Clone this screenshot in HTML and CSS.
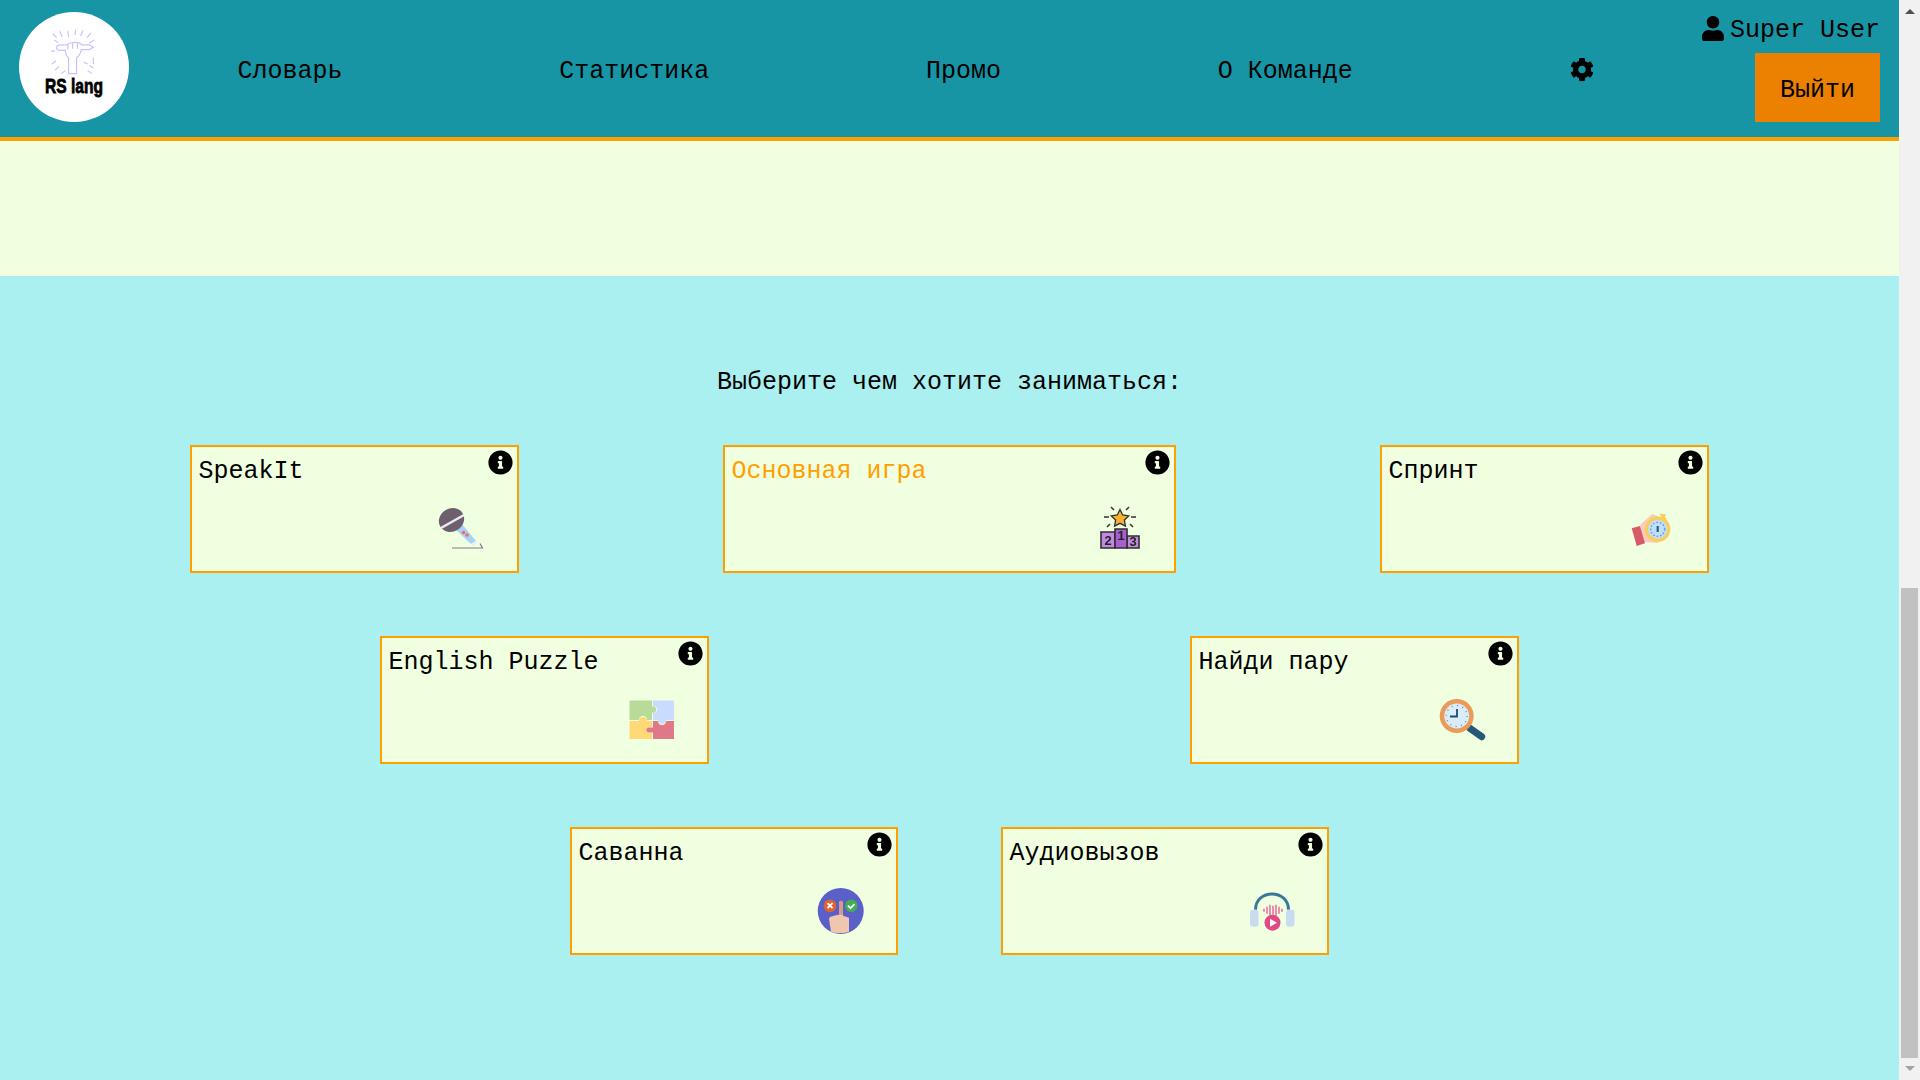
FILE: index.html
```html
<!DOCTYPE html>
<html lang="ru">
<head>
<meta charset="utf-8">
<title>RS lang</title>
<link rel="stylesheet" href="styles.css">
</head>
<body>
<div class="page">
  <header class="header">
    <div class="logo">
      <svg class="logo-art" viewBox="0 0 110 110">
        <g class="logo-lines" transform="translate(16 4) scale(.8)">
          <path d="M22 22l5 5M31 19l3 7M41 19l1 7M51 17l-1 7M60 18l-3 7M70 21l-5 6M74 30l-6 4M73 52v8M68 62l5 3M24 30l5 3M20 44h5M26 56l-5 4M30 63l-5 5M38 68l-5 4M66 68l5 4M61 58l5 2"/>
          <path d="M27 40c0-3 2-4 5-4h8c3-3 8-3 11-3 3 0 6 1 7 3h10l5 3-5 3H58c-1 4-2 8-6 10v20H42V52c-3-2-4-6-4-9h-6c-3 0-5-1-5-3z"/>
          <path d="M41 36v6M47 34v7M53 34v7"/>
        </g>
        <text class="logo-text" x="26" y="81" textLength="58" lengthAdjust="spacingAndGlyphs">RS lang</text>
      </svg>
    </div>
    <nav class="nav">
      <a class="nav-link">Словарь</a>
      <a class="nav-link">Статистика</a>
      <a class="nav-link">Промо</a>
      <a class="nav-link">О Команде</a>
      <svg class="cog" viewBox="0 0 512 512"><path d="M487.4 315.7l-42.6-24.6c4.3-23.2 4.3-47 0-70.2l42.6-24.6c4.9-2.8 7.1-8.6 5.5-14-11.1-35.6-30-67.8-54.7-94.6-3.8-4.1-10-5.1-14.8-2.3L380.8 110c-17.9-15.4-38.5-27.3-60.8-35.1V25.8c0-5.6-3.9-10.5-9.4-11.7-36.7-8.2-74.3-7.8-109.2 0-5.5 1.2-9.4 6.1-9.4 11.7V75c-22.2 7.9-42.8 19.8-60.8 35.1L88.7 85.5c-4.9-2.8-11-1.9-14.8 2.3-24.7 26.7-43.6 58.9-54.7 94.6-1.7 5.4.6 11.2 5.5 14L67.3 221c-4.3 23.2-4.3 47 0 70.2l-42.6 24.6c-4.9 2.8-7.1 8.6-5.5 14 11.1 35.6 30 67.8 54.7 94.6 3.8 4.1 10 5.1 14.8 2.3l42.6-24.6c17.9 15.4 38.5 27.3 60.8 35.1v49.2c0 5.6 3.9 10.5 9.4 11.7 36.7 8.2 74.3 7.8 109.2 0 5.5-1.2 9.4-6.1 9.4-11.7v-49.2c22.2-7.9 42.8-19.8 60.8-35.1l42.6 24.6c4.9 2.8 11 1.9 14.8-2.3 24.7-26.7 43.6-58.9 54.7-94.6 1.5-5.5-.7-11.3-5.6-14.1zM256 336c-44.1 0-80-35.9-80-80s35.9-80 80-80 80 35.9 80 80-35.9 80-80 80z"/></svg>
    </nav>
    <div class="account">
      <div class="user">
        <svg class="user-icon" viewBox="0 0 448 512"><path d="M224 256c70.7 0 128-57.3 128-128S294.7 0 224 0 96 57.3 96 128s57.3 128 128 128zm89.6 32h-16.7c-22.2 10.2-46.9 16-72.9 16s-50.6-5.8-72.9-16h-16.7C60.2 288 0 348.2 0 422.4V464c0 26.5 21.5 48 48 48h352c26.5 0 48-21.5 48-48v-41.6c0-74.2-60.2-134.4-134.4-134.4z"/></svg>
        <span class="user-name">Super User</span>
      </div>
      <button class="logout">Выйти</button>
    </div>
  </header>
  <div class="band"></div>
  <main class="content">
    <h1 class="prompt">Выберите чем хотите заниматься:</h1>
    <div class="rows">
      <div class="row row-a">
        <div class="card">
          <span class="card-title">SpeakIt</span>
          <svg class="info" viewBox="0 0 512 512"><path d="M256 8C119.043 8 8 119.083 8 256c0 136.997 111.043 248 248 248s248-111.003 248-248C504 119.083 392.957 8 256 8zm0 110c23.196 0 42 18.804 42 42s-18.804 42-42 42-42-18.804-42-42 18.804-42 42-42zm56 254c0 6.627-5.373 12-12 12h-88c-6.627 0-12-5.373-12-12v-24c0-6.627 5.373-12 12-12h12v-64h-12c-6.627 0-12-5.373-12-12v-24c0-6.627 5.373-12 12-12h64c6.627 0 12 5.373 12 12v100h12c6.627 0 12 5.373 12 12v24z"/></svg>
          <svg class="game-icon" viewBox="0 0 48 48">
            <path d="M17 24L24 19L38 36L33 39Z" fill="#a8d4f4"/>
            <path d="M33 39l5-3 1.500 2-4 3z" fill="#e8eef4"/>
            <circle cx="25.500" cy="27.500" r="1.800" fill="#f06a6a"/>
            <circle cx="29" cy="30" r="1.800" fill="#f06a6a"/>
            <ellipse cx="13.500" cy="15" rx="13" ry="11.500" transform="rotate(-30 13.500 15)" fill="#6e5f6e"/>
            <path d="M3 23L26 10" stroke="#e9eef0" stroke-width="2.500"/>
            <path d="M14 43H44.500L42 38.500" fill="none" stroke="#84788a" stroke-width="1.200"/>
          </svg>
        </div>
        <div class="card card-wide">
          <span class="card-title card-title-active">Основная игра</span>
          <svg class="info" viewBox="0 0 512 512"><path d="M256 8C119.043 8 8 119.083 8 256c0 136.997 111.043 248 248 248s248-111.003 248-248C504 119.083 392.957 8 256 8zm0 110c23.196 0 42 18.804 42 42s-18.804 42-42 42-42-18.804-42-42 18.804-42 42-42zm56 254c0 6.627-5.373 12-12 12h-88c-6.627 0-12-5.373-12-12v-24c0-6.627 5.373-12 12-12h12v-64h-12c-6.627 0-12-5.373-12-12v-24c0-6.627 5.373-12 12-12h64c6.627 0 12 5.373 12 12v100h12c6.627 0 12 5.373 12 12v24z"/></svg>
          <svg class="game-icon game-icon-sharp" viewBox="0 0 48 48">
            <path d="M25 4.500l2.700 5.500 6 .9-4.300 4.200 1 6-5.400-2.800-5.400 2.800 1-6-4.300-4.200 6-.9z" fill="#f8b030" stroke="#2f2f2f" stroke-width="1.300"/>
            <path d="M16 2l3 3M34 2l-3 3M9 12h5M36 12h5M12 22l3-3M38 22l-3-3" stroke="#333" stroke-width="1.500"/>
            <path d="M6 27H20V43H6zM32 31H44V43H32z" fill="#c08ae0" stroke="#2f2f2f" stroke-width="1.600"/>
            <path d="M20 24H32V43H20z" fill="#a860d0" stroke="#2f2f2f" stroke-width="1.600"/>
            <text class="podium-num" x="13" y="40">2</text>
            <text class="podium-num" x="26" y="35">1</text>
            <text class="podium-num" x="38" y="41">3</text>
          </svg>
        </div>
        <div class="card">
          <span class="card-title">Спринт</span>
          <svg class="info" viewBox="0 0 512 512"><path d="M256 8C119.043 8 8 119.083 8 256c0 136.997 111.043 248 248 248s248-111.003 248-248C504 119.083 392.957 8 256 8zm0 110c23.196 0 42 18.804 42 42s-18.804 42-42 42-42-18.804-42-42 18.804-42 42-42zm56 254c0 6.627-5.373 12-12 12h-88c-6.627 0-12-5.373-12-12v-24c0-6.627 5.373-12 12-12h12v-64h-12c-6.627 0-12-5.373-12-12v-24c0-6.627 5.373-12 12-12h64c6.627 0 12 5.373 12 12v100h12c6.627 0 12 5.373 12 12v24z"/></svg>
          <svg class="game-icon" viewBox="0 0 48 48">
            <path d="M12 20L24 9L30 11L36 20L30 38L16 37Z" fill="#f9cdbb"/>
            <path d="M3.700 23.300L12 21L17 38.300L8.700 41Z" fill="#d85a68"/>
            <path d="M31 8.500l7 1-1 3 2 1.500-2 2-5-3 1-2z" fill="#f8cf5a"/>
            <circle cx="29.700" cy="24.300" r="12.700" fill="#f8cf5a"/>
            <circle cx="29.700" cy="24.300" r="9.500" fill="#bfe0fa"/>
            <circle cx="29.700" cy="24.300" r="7" fill="none" stroke="#6f96c8" stroke-width="1.500" stroke-dasharray="1.500 2"/>
            <path d="M29.700 21v6" stroke="#2c5a86" stroke-width="2.200"/>
          </svg>
        </div>
      </div>
      <div class="row row-b">
        <div class="card">
          <span class="card-title">English Puzzle</span>
          <svg class="info" viewBox="0 0 512 512"><path d="M256 8C119.043 8 8 119.083 8 256c0 136.997 111.043 248 248 248s248-111.003 248-248C504 119.083 392.957 8 256 8zm0 110c23.196 0 42 18.804 42 42s-18.804 42-42 42-42-18.804-42-42 18.804-42 42-42zm56 254c0 6.627-5.373 12-12 12h-88c-6.627 0-12-5.373-12-12v-24c0-6.627 5.373-12 12-12h12v-64h-12c-6.627 0-12-5.373-12-12v-24c0-6.627 5.373-12 12-12h64c6.627 0 12 5.373 12 12v100h12c6.627 0 12 5.373 12 12v24z"/></svg>
          <svg class="game-icon" viewBox="0 4 48 48">
            <path d="M1.500 8.500H24V14.500a3.200 3.200 0 1 1 0 6V28H19a4 4 0 0 0-8 0H1.500z" fill="#b8dc98"/>
            <path d="M25 8.500H46V28H38a4 4 0 0 1-8 0H25V20.500a3.200 3.200 0 1 0 0-6z" fill="#c8dcff"/>
            <path d="M1.500 29H11a4 4 0 1 1 8 0h5V35.500a3 3 0 1 0 0 5V47H1.500z" fill="#ffd878"/>
            <path d="M25 29h5a4 4 0 0 0 8 0H46V47H25V40.500H21a2.500 2.500 0 1 1 0-5h4z" fill="#e07888"/>
          </svg>
        </div>
        <div class="card">
          <span class="card-title">Найди пару</span>
          <svg class="info" viewBox="0 0 512 512"><path d="M256 8C119.043 8 8 119.083 8 256c0 136.997 111.043 248 248 248s248-111.003 248-248C504 119.083 392.957 8 256 8zm0 110c23.196 0 42 18.804 42 42s-18.804 42-42 42-42-18.804-42-42 18.804-42 42-42zm56 254c0 6.627-5.373 12-12 12h-88c-6.627 0-12-5.373-12-12v-24c0-6.627 5.373-12 12-12h12v-64h-12c-6.627 0-12-5.373-12-12v-24c0-6.627 5.373-12 12-12h64c6.627 0 12 5.373 12 12v100h12c6.627 0 12 5.373 12 12v24z"/></svg>
          <svg class="game-icon" viewBox="0 4 48 48">
            <path d="M32 36.300L43.700 44.700" stroke="#285878" stroke-width="7" stroke-linecap="round"/>
            <circle cx="18.700" cy="24" r="17" fill="#ec9a58"/>
            <circle cx="18.700" cy="24" r="12.500" fill="#d8ecfa"/>
            <circle cx="18.700" cy="24" r="10.500" fill="none" stroke="#6b86a8" stroke-width="1.300" stroke-dasharray="1 4.500"/>
            <path d="M19 17V24.500H12" fill="none" stroke="#24476a" stroke-width="1.800"/>
          </svg>
        </div>
      </div>
      <div class="row row-c">
        <div class="card card-slim">
          <span class="card-title">Саванна</span>
          <svg class="info" viewBox="0 0 512 512"><path d="M256 8C119.043 8 8 119.083 8 256c0 136.997 111.043 248 248 248s248-111.003 248-248C504 119.083 392.957 8 256 8zm0 110c23.196 0 42 18.804 42 42s-18.804 42-42 42-42-18.804-42-42 18.804-42 42-42zm56 254c0 6.627-5.373 12-12 12h-88c-6.627 0-12-5.373-12-12v-24c0-6.627 5.373-12 12-12h12v-64h-12c-6.627 0-12-5.373-12-12v-24c0-6.627 5.373-12 12-12h64c6.627 0 12 5.373 12 12v100h12c6.627 0 12 5.373 12 12v24z"/></svg>
          <svg class="game-icon" viewBox="0 1.300 48 48">
            <circle cx="23.700" cy="25.300" r="23" fill="#5a60c8"/>
            <circle cx="13" cy="20" r="6.300" fill="#e2632f"/>
            <path d="M10.500 17.500l5 5M15.500 17.500l-5 5" stroke="#fff" stroke-width="1.800"/>
            <circle cx="34.300" cy="20" r="6.300" fill="#3fae55"/>
            <path d="M31 20l2.500 2.500 4-4" fill="none" stroke="#fff" stroke-width="1.800"/>
            <path d="M22 18c0-4 4-4 4 0v12l6 2v14c-3 1.500-14 2-18 0L12 33c0-3 10-4 10-4z" fill="#f1c6ae"/>
            <path d="M22 18c0-4 4-4 4 0v11h-4z" fill="#d99a82"/>
          </svg>
        </div>
        <div class="card card-slim">
          <span class="card-title">Аудиовызов</span>
          <svg class="info" viewBox="0 0 512 512"><path d="M256 8C119.043 8 8 119.083 8 256c0 136.997 111.043 248 248 248s248-111.003 248-248C504 119.083 392.957 8 256 8zm0 110c23.196 0 42 18.804 42 42s-18.804 42-42 42-42-18.804-42-42 18.804-42 42-42zm56 254c0 6.627-5.373 12-12 12h-88c-6.627 0-12-5.373-12-12v-24c0-6.627 5.373-12 12-12h12v-64h-12c-6.627 0-12-5.373-12-12v-24c0-6.627 5.373-12 12-12h64c6.627 0 12 5.373 12 12v100h12c6.627 0 12 5.373 12 12v24z"/></svg>
          <svg class="game-icon" viewBox="0 1.300 48 48">
            <path d="M7.500 24C7.500 3 40.500 3 40.500 24" fill="none" stroke="#3a7898" stroke-width="3"/>
            <rect x="2" y="24" width="8.500" height="17" rx="3" fill="#c8dcf0"/>
            <rect x="38" y="24" width="8.500" height="17" rx="3" fill="#c8dcf0"/>
            <path d="M16 23v3M19 21v7M22 19v11M25 20v9M28 19v11M31 21v7M34 23v3" stroke="#ea6a98" stroke-width="1.500"/>
            <circle cx="24.500" cy="37" r="8" fill="#e04888"/>
            <path d="M22 33l7 4-7 4z" fill="#fff"/>
          </svg>
        </div>
      </div>
    </div>
  </main>
</div>
<div class="scrollbar">
  <span class="arrow-up"></span>
  <span class="thumb"></span>
  <span class="arrow-down"></span>
</div>
</body>
</html>
```

FILE: styles.css
```css
* { box-sizing: border-box; }

html, body { margin: 0; height: 100%; }

body {
  display: flex;
  height: 100vh;
  overflow: hidden;
  font-family: "Liberation Mono", monospace;
  font-size: 25px;
  color: #000;
  background: #aaf0f0;
}

.page {
  flex: 1;
  display: flex;
  flex-direction: column;
  min-width: 0;
}

.header {
  display: flex;
  align-items: flex-start;
  height: 141px;
  padding: 12px 19px 0;
  background: #1795a5;
  border-bottom: 4px solid #ff9f00;
}

.logo {
  flex: none;
  width: 110px;
  height: 110px;
  border-radius: 50%;
  background: #fff;
}

.logo-art { display: block; width: 110px; height: 110px; }

.logo-lines {
  fill: none;
  stroke: #c9c2ff;
  stroke-width: 1.500;
  filter: blur(0.3px);
}

.logo-text {
  font-family: "Liberation Sans Narrow", "Liberation Sans", sans-serif;
  font-weight: 700;
  font-size: 21px;
  fill: #000;
  stroke: #000;
  stroke-width: 0.800;
}

.nav {
  flex: 1;
  display: flex;
  align-items: center;
  justify-content: space-around;
  height: 116px;
}

.nav-link { padding-top: 4px; line-height: 30px; color: #000; }

.cog { width: 24px; height: 25px; margin-bottom: 2px; }

.account {
  flex: none;
  width: 178px;
  display: flex;
  flex-direction: column;
  align-items: flex-end;
}

.user {
  display: flex;
  align-items: center;
  gap: 6px;
  height: 25px;
  margin-top: 4px;
  line-height: 30px;
  white-space: nowrap;
}

.user-name { padding-top: 4px; }

.user-icon { width: 22px; height: 25px; flex: none; }

.logout {
  width: 125px;
  height: 69px;
  margin-top: 12px;
  padding: 5px 0 0;
  border: 0;
  background: #ec8000;
  color: #000;
  font: inherit;
}

.band {
  flex: none;
  height: 135px;
  background: #f0ffe0;
}

.content {
  flex: 1;
  padding-top: 92px;
  background: #aaf0f0;
}

.prompt {
  margin: 0 0 47px;
  font-size: 25px;
  font-weight: 400;
  line-height: 30px;
  text-align: center;
}

.rows {
  display: flex;
  flex-direction: column;
  gap: 63px;
}

.row {
  display: flex;
  justify-content: center;
}

.row-a { gap: 204px; }
.row-b { gap: 481px; }
.row-c { gap: 103px; }

.card {
  position: relative;
  display: flex;
  flex-direction: column;
  width: 329px;
  height: 128px;
  padding: 10px 31px 0 6.500px;
  border: 2px solid #ff9f00;
  background: #f0ffe0;
}

.card-wide { width: 453px; }
.card-slim { width: 328px; }

.card-title { line-height: 30px; }
.card-title-active { color: #ff9f00; }

.info {
  position: absolute;
  top: 3px;
  right: 4px;
  width: 25px;
  height: 25px;
}

.game-icon {
  width: 48px;
  height: 48px;
  margin: 18px 0 0 auto;
  filter: blur(0.5px);
}

.game-icon-sharp { filter: blur(0.3px); }

.podium-num {
  font-family: "Liberation Sans", sans-serif;
  font-size: 13px;
  font-weight: 700;
  text-anchor: middle;
  fill: #222;
}

.scrollbar {
  flex: none;
  width: 21px;
  display: flex;
  flex-direction: column;
  align-items: center;
  padding-top: 9px;
  background: #f1f1f1;
}

.arrow-up {
  width: 0;
  height: 0;
  margin-left: 1px;
  border-left: 5px solid transparent;
  border-right: 5px solid transparent;
  border-bottom: 5px solid #505050;
}

.thumb {
  width: 17px;
  height: 470px;
  margin-top: 574px;
  background: #c1c1c1;
}

.arrow-down {
  width: 0;
  height: 0;
  margin-top: 8px;
  margin-left: 1px;
  border-left: 5px solid transparent;
  border-right: 5px solid transparent;
  border-top: 5px solid #a3a3a3;
}
```
